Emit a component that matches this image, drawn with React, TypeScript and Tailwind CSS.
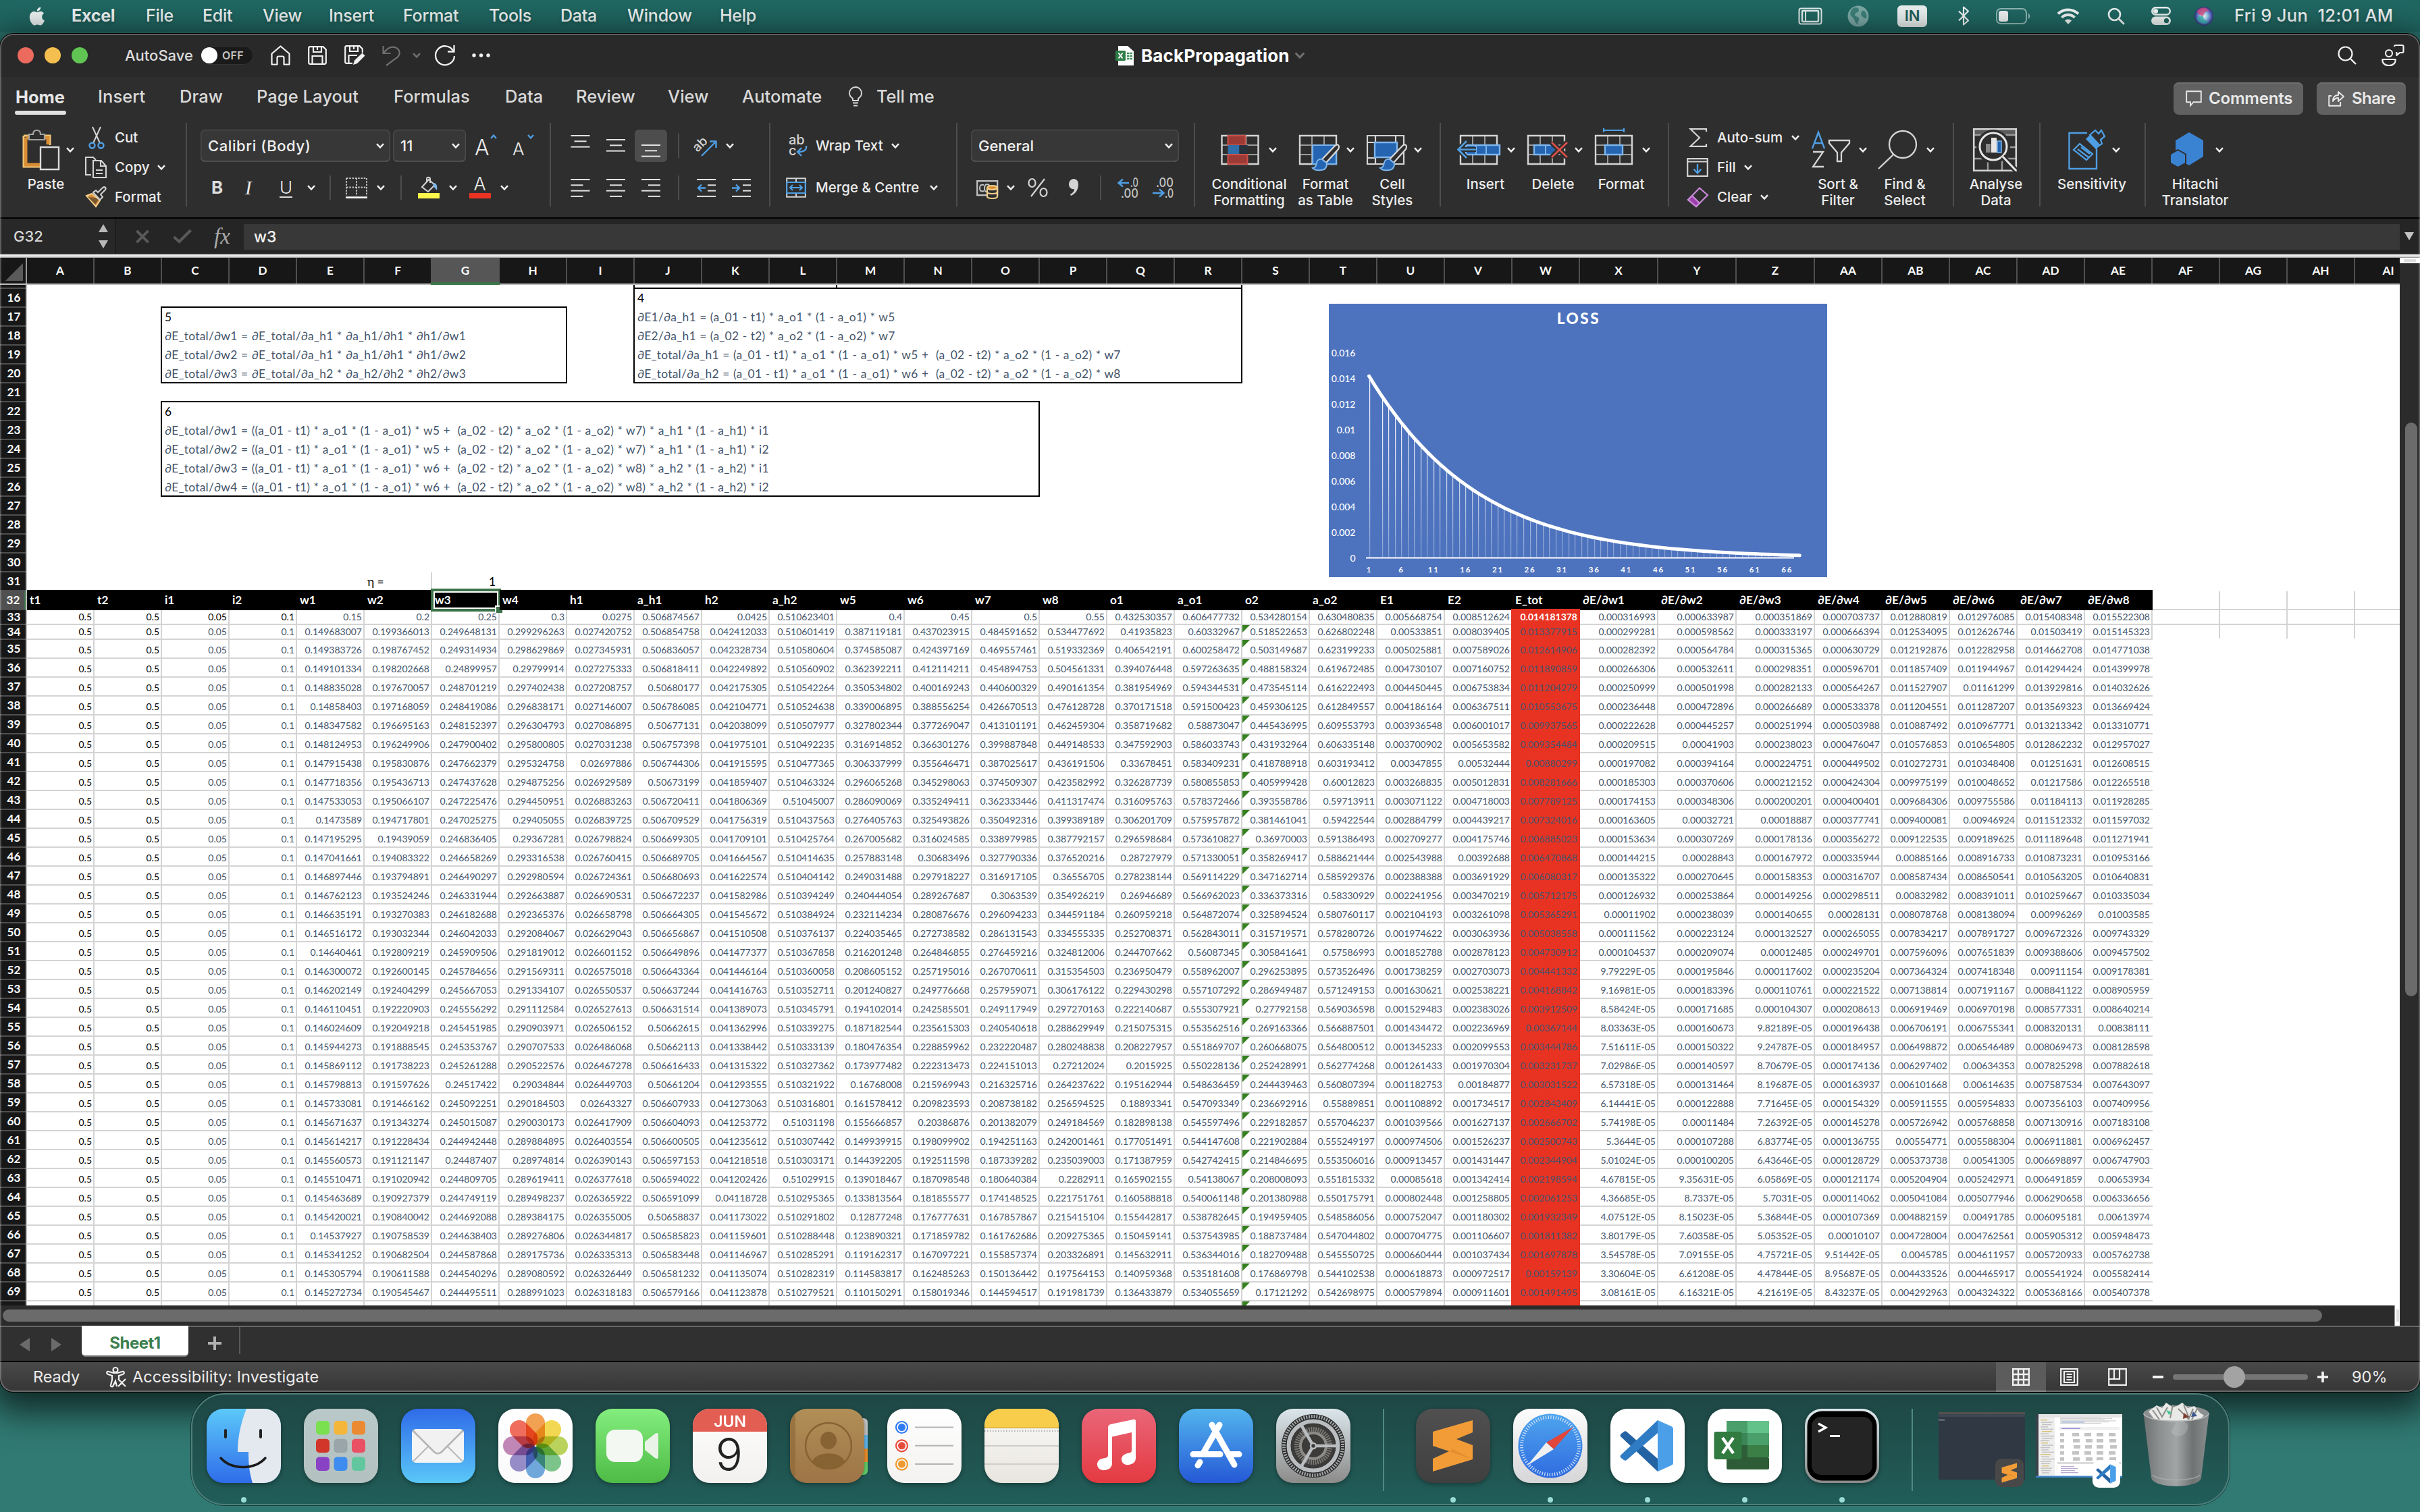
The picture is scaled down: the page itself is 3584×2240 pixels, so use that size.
import React from 'react';

/* ------------------------------------------------------------------ */
/* Network simulation that fills the worksheet                         */
/* ------------------------------------------------------------------ */

const sigmoid = (x: number) => 1 / (1 + Math.exp(-x));

function simulate(steps: number): number[][] {
  const t1 = 0.5, t2 = 0.5, i1 = 0.05, i2 = 0.1, eta = 1;
  let w = [0.15, 0.2, 0.25, 0.3, 0.4, 0.45, 0.5, 0.55];
  const rows: number[][] = [];
  for (let n = 0; n < steps; n++) {
    const h1 = w[0] * i1 + w[1] * i2;
    const h2 = w[2] * i1 + w[3] * i2;
    const ah1 = sigmoid(h1);
    const ah2 = sigmoid(h2);
    const o1 = w[4] * ah1 + w[5] * ah2;
    const o2 = w[6] * ah1 + w[7] * ah2;
    const ao1 = sigmoid(o1);
    const ao2 = sigmoid(o2);
    const e1 = 0.5 * (t1 - ao1) ** 2;
    const e2 = 0.5 * (t2 - ao2) ** 2;
    const d1 = (ao1 - t1) * ao1 * (1 - ao1);
    const d2 = (ao2 - t2) * ao2 * (1 - ao2);
    // The sheet reuses the a_h1 derivative for both hidden units.
    const dh = ah1 * (1 - ah1);
    const g1 = (d1 * w[4] + d2 * w[6]) * dh;
    const g2 = (d1 * w[5] + d2 * w[7]) * dh;
    const g = [g1 * i1, g1 * i2, g2 * i1, g2 * i2, d1 * ah1, d1 * ah2, d2 * ah1, d2 * ah2];
    rows.push([t1, t2, i1, i2, w[0], w[1], w[2], w[3], h1, ah1, h2, ah2, w[4], w[5], w[6], w[7], o1, ao1, o2, ao2, e1, e2, e1 + e2, ...g]);
    w = w.map((v, k) => v - eta * g[k]);
  }
  return rows;
}

function general(v: number): string {
  if (v < 1e-4) {
    const [m, e] = v.toExponential(5).split('e-');
    return `${Number(m)}E-${e.padStart(2, '0')}`;
  }
  return String(Number(v.toFixed(9)));
}

const DATA = simulate(68);

const COLS = ['A', 'B', 'C', 'D', 'E', 'F', 'G', 'H', 'I', 'J', 'K', 'L', 'M', 'N', 'O', 'P', 'Q', 'R', 'S', 'T', 'U', 'V', 'W', 'X', 'Y', 'Z', 'AA', 'AB', 'AC', 'AD', 'AE', 'AF', 'AG', 'AH', 'AI'];
const HEADS = ['t1', 't2', 'i1', 'i2', 'w1', 'w2', 'w3', 'w4', 'h1', 'a_h1', 'h2', 'a_h2', 'w5', 'w6', 'w7', 'w8', 'o1', 'a_o1', 'o2', 'a_o2', 'E1', 'E2', 'E_tot', '∂E/∂w1', '∂E/∂w2', '∂E/∂w3', '∂E/∂w4', '∂E/∂w5', '∂E/∂w6', '∂E/∂w7', '∂E/∂w8'];
const colW = (c: number) => (c >= 23 && c <= 25 ? 'w-[116px]' : 'w-[100px]');

/* ------------------------------------------------------------------ */
/* Small shared pieces                                                 */
/* ------------------------------------------------------------------ */

type P = { children?: React.ReactNode; className?: string };

const Ico = ({ vb, className, children }: P & { vb: string }) => (
  <svg viewBox={vb} className={`shrink-0 overflow-visible ${className ?? ''}`} fill="none">{children}</svg>
);

const Chev = ({ className = '', color = '#f0f0f0' }: { className?: string; color?: string }) => (
  <svg viewBox="0 0 12 8" className={`h-[8px] w-[12px] shrink-0 overflow-visible ${className}`} fill="none">
    <path d="M1 1.2 6 6.4 11 1.2" stroke={color} strokeWidth="2.4" />
  </svg>
);

const Slot = ({ className = '', children }: P) => (
  <div className={`flex shrink-0 items-center whitespace-nowrap ${className}`}>{children}</div>
);

/* ------------------------------------------------------------------ */
/* macOS menu bar                                                      */
/* ------------------------------------------------------------------ */

const MENUS: [string, string][] = [
  ['File', 'w-[84px]'], ['Edit', 'w-[89px]'], ['View', 'w-[98px]'], ['Insert', 'w-[110px]'], ['Format', 'w-[127px]'],
  ['Tools', 'w-[106px]'], ['Data', 'w-[99px]'], ['Window', 'w-[137px]'], ['Help', 'w-[80px]'],
];

function MenuBar() {
  return (
    <div className="flex h-[48px] shrink-0 items-center bg-[#206762] pb-px text-[25px] font-medium tracking-[-0.250px] text-[#eef4f3] [text-shadow:0_2px_4px_rgba(0,0,0,0.25)]">
      <Ico vb="0 0 26 32" className="ml-[40px] mr-[39px] h-[32px] w-[27px]">
        <path fill="#eef4f3" d="M21.6 17c0-3.1 2.5-4.6 2.6-4.7-1.4-2.1-3.6-2.4-4.4-2.4-1.900-.2-3.700 1.100-4.600 1.100-1 0-2.400-1.100-4-1.100-2 0-3.900 1.200-5 3-2.100 3.700-.5 9.200 1.500 12.200 1 1.500 2.200 3.100 3.800 3.100 1.500-.1 2.100-1 4-1 1.800 0 2.300 1 4 .9 1.600 0 2.700-1.500 3.700-2.900 1.200-1.700 1.600-3.300 1.700-3.400-.1 0-3.300-1.200-3.300-4.800zM18.600 7.900c.8-1 1.400-2.400 1.200-3.900-1.200.1-2.700.8-3.500 1.800-.8.900-1.500 2.400-1.300 3.700 1.300.1 2.700-.7 3.600-1.600z" transform="translate(-2.500 -2) scale(1.12)" />
      </Ico>
      <Slot className="w-[110px] font-bold">Excel</Slot>
      {MENUS.map(([t, w]) => <Slot key={t} className={w}>{t}</Slot>)}
      <Ico vb="0 0 36 26" className="ml-[1517px] mr-[37px] h-[26px] w-[36px]">
        <rect x="1.500" y="1.500" width="33" height="23" rx="3" stroke="#e3eeed" strokeWidth="2" />
        <rect x="6" y="5" width="24" height="16" rx="1" stroke="#e3eeed" strokeWidth="2.500" />
        <path d="M11 5v16" stroke="#e3eeed" strokeWidth="2" />
      </Ico>
      <Ico vb="0 0 32 32" className="mr-[42px] h-[32px] w-[32px]">
        <circle cx="16" cy="16" r="15.500" fill="#7ba9a5" />
        <path d="M13 3c4 1 5 4 3 6s-5 2-5 5 5 2 6 5-2 5-2 9c-4-2-4-7-7-10S3 13 5 9s4-6 8-6zM22 8c3-1 5 2 6 5s1 5-1 6-4-2-6-4 0-6 1-7z" fill="#3d7f7a" />
      </Ico>
      <div className="mr-[45px] flex h-[32px] w-[44px] shrink-0 items-center justify-center rounded-[6px] bg-[#eaf1f0] text-[22px] font-semibold text-[#1f5d59] [text-shadow:none]">IN</div>
      <Ico vb="0 0 18 28" className="mr-[39px] h-[29px] w-[18px]">
        <path d="M2 7l14 14-7 6V1l7 6L2 21" stroke="#eef4f3" strokeWidth="2.200" strokeLinejoin="round" />
      </Ico>
      <Ico vb="0 0 52 24" className="mr-[38px] h-[24px] w-[52px]">
        <rect x="1" y="1" width="44" height="22" rx="6" stroke="#8fb8b5" strokeWidth="2" />
        <rect x="4" y="4" width="14" height="16" rx="3.500" fill="#eef4f3" />
        <path d="M48 8c3 1 3 7 0 8z" fill="#8fb8b5" />
      </Ico>
      <Ico vb="0 0 34 25" className="mr-[41px] h-[25px] w-[34px]">
        <path d="M2 9.500a21.500 21.500 0 0 1 30 0M7.500 15a13.500 13.500 0 0 1 19 0" stroke="#eef4f3" strokeWidth="4" />
        <path d="M17 25l-5-5.400a7 7 0 0 1 10 0z" fill="#eef4f3" />
      </Ico>
      <Ico vb="0 0 25 25" className="mr-[40px] h-[25px] w-[25px]">
        <circle cx="10.500" cy="10.500" r="8.500" stroke="#eef4f3" strokeWidth="2.700" />
        <path d="M16.500 16.500 24 24" stroke="#eef4f3" strokeWidth="3" strokeLinecap="round" />
      </Ico>
      <Ico vb="0 0 29 27" className="mr-[35px] h-[27px] w-[29px]">
        <rect x="1.200" y="1.200" width="26.600" height="10.600" rx="5.300" stroke="#eef4f3" strokeWidth="2.400" />
        <circle cx="6.500" cy="6.500" r="3.600" fill="#eef4f3" />
        <rect x="0" y="14.500" width="29" height="12.500" rx="6.200" fill="#eef4f3" />
        <circle cx="22.500" cy="20.700" r="3.600" fill="#206762" />
      </Ico>
      <Ico vb="0 0 28 28" className="mr-[31px] h-[28px] w-[28px]">
        <defs>
          <radialGradient id="siri" cx=".5" cy=".5" r=".55">
            <stop offset="0" stopColor="#fff" />
            <stop offset=".35" stopColor="#9fd0f0" />
            <stop offset=".7" stopColor="#5561c0" />
            <stop offset="1" stopColor="#23264a" />
          </radialGradient>
        </defs>
        <circle cx="14" cy="14" r="14" fill="url(#siri)" />
        <path d="M4 6c5-6 14-6 18 0-6 0-8 4-9 8C9 13 4 11 4 6z" fill="#e0457a" opacity=".75" />
        <path d="M3 17c3 8 13 11 19 5-5 0-9-3-9-8-4 0-8 0-10 3z" fill="#2cb7a8" opacity=".7" />
      </Ico>
      <Slot className="text-[25.500px] tracking-[0.350px]">Fri 9 Jun&nbsp; 12:01 AM</Slot>
    </div>
  );
}

/* ------------------------------------------------------------------ */
/* Window title bar                                                    */
/* ------------------------------------------------------------------ */

function TitleBar() {
  return (
    <div className="flex h-[64px] shrink-0 items-center bg-[#292929] pl-[26px]">
      <div className="flex gap-[16px]">
        <div className="size-[24px] rounded-full bg-[#ed6a5e]" />
        <div className="size-[24px] rounded-full bg-[#f5bf4f]" />
        <div className="size-[24px] rounded-full bg-[#61c554]" />
      </div>
      <Slot className="ml-[55px] w-[112px] text-[22px] font-medium text-[#dcdcdc]">AutoSave</Slot>
      <div className="flex h-[28px] w-[78px] shrink-0 items-center rounded-full bg-[#1a1a1a] pl-px shadow-[inset_0_0_0_1px_#333]">
        <div className="size-[24px] rounded-full bg-white" />
        <span className="ml-[7px] text-[16px] font-semibold tracking-[0.300px] text-[#c4c4c4]">OFF</span>
      </div>
      <Ico vb="0 0 29 30" className="ml-[26px] h-[30px] w-[29px]">
        <path d="M1.500 12.500 14.500 1.500l13 11v16h-8v-10a2 2 0 0 0-2-2h-6a2 2 0 0 0-2 2v10h-8z" stroke="#f2f2f2" strokeWidth="2.200" strokeLinejoin="round" />
      </Ico>
      <Ico vb="0 0 28 28" className="ml-[26px] h-[28px] w-[28px]">
        <path d="M3.500 1.200h19l4.300 4.300v19a2.300 2.300 0 0 1-2.300 2.300h-21a2.300 2.300 0 0 1-2.300-2.300v-21a2.300 2.300 0 0 1 2.300-2.300zM8 1.500v7.500h12V1.500M6.500 26.500V15h15v11.500M14 2v4" stroke="#f2f2f2" strokeWidth="2.200" />
      </Ico>
      <Ico vb="0 0 31 30" className="ml-[26px] h-[30px] w-[31px]">
        <path d="M12 26.800H3.500a2.300 2.300 0 0 1-2.300-2.300v-21a2.300 2.300 0 0 1 2.300-2.300h19l4.300 4.300V11M8 1.500v7.500h12V1.500M6.500 26.500V15H19M14 2v4" stroke="#f2f2f2" strokeWidth="2.200" />
        <path d="M13 29l2-6.500L26.500 11.500l4 4L19 27z" fill="#f2f2f2" />
      </Ico>
      <Ico vb="0 0 28 31" className="ml-[25px] h-[31px] w-[28px]">
        <path d="M1.500 1v11h11M2 11.500C8 4 14 1 20 3.500s7.500 9 3 14L6 30" stroke="#6f6f6f" strokeWidth="2.200" />
      </Ico>
      <Chev className="ml-[17px]" color="#6f6f6f" />
      <Ico vb="0 0 33 32" className="ml-[19px] h-[32px] w-[33px]">
        <path d="M29 9A14 14 0 1 0 31 17M30.500 1v9.500H21" stroke="#f2f2f2" strokeWidth="2.300" />
      </Ico>
      <Ico vb="0 0 27 6" className="ml-[24px] h-[6px] w-[27px]">
        <g fill="#f2f2f2"><circle cx="3" cy="3" r="2.700" /><circle cx="13.500" cy="3" r="2.700" /><circle cx="24" cy="3" r="2.700" /></g>
      </Ico>
      <Ico vb="0 0 27 29" className="ml-[926px] h-[29px] w-[27px]">
        <path d="M4 0h14l9 8v21H4z" fill="#fff" />
        <path d="M17 11h8M17 15h8M17 19h8" stroke="#3c8f5c" strokeWidth="2.600" strokeDasharray="3.500 1" />
        <rect x="0" y="7" width="15" height="15" rx="1.500" fill="#2d7d46" />
        <path d="M4.500 10.500l6 8M10.500 10.500l-6 8" stroke="#fff" strokeWidth="2" />
      </Ico>
      <Slot className="ml-[11px] w-[220px] text-[26px] font-bold tracking-[0.150px] text-white">BackPropagation</Slot>
      <Chev className="ml-[7px] h-[10px]! w-[16px]!" color="#707070" />
      <Ico vb="0 0 28 28" className="ml-[1529px] h-[28px] w-[28px]">
        <circle cx="11.500" cy="11.500" r="10" stroke="#f2f2f2" strokeWidth="2.200" />
        <path d="M18.500 18.500 27 27" stroke="#f2f2f2" strokeWidth="2.400" />
      </Ico>
      <Ico vb="0 0 34 32" className="ml-[37px] h-[32px] w-[34px]">
        <circle cx="11" cy="13" r="5" stroke="#f2f2f2" strokeWidth="2.200" />
        <path d="M1.500 22h19c.8 5-3 9-9.500 9s-10.300-4-9.500-9zM19 3a2 2 0 0 1 2-2h9.500a2 2 0 0 1 2 2v7a2 2 0 0 1-2 2H27l-4.500 4v-4H21" stroke="#f2f2f2" strokeWidth="2.200" strokeLinejoin="round" />
      </Ico>
    </div>
  );
}

/* ------------------------------------------------------------------ */
/* Ribbon                                                              */
/* ------------------------------------------------------------------ */

const TABS: [string, string][] = [
  ['Insert', 'w-[121px]'], ['Draw', 'w-[114px]'], ['Page Layout', 'w-[203px]'], ['Formulas', 'w-[165px]'],
  ['Data', 'w-[105px]'], ['Review', 'w-[136px]'], ['View', 'w-[110px]'], ['Automate', 'w-[158px]'],
];

function TabRow() {
  return (
    <div className="flex h-[64px] shrink-0 items-start pl-[23px] text-[25.500px] font-medium tracking-[0.050px] text-[#d9d9d9]">
      <div className="flex h-[56px] w-[122px] shrink-0 flex-col">
        <div className="h-[50px] font-bold leading-[59px] tracking-[-0.100px] text-[#e6e6e6]">Home</div>
        <div className="-ml-px h-[6px] w-[76px] rounded-full bg-[#e0e0e0]" />
      </div>
      {TABS.map(([t, w]) => <Slot key={t} className={`h-[59px] ${w}`}>{t}</Slot>)}
      <Ico vb="0 0 20 30" className="mt-[14px] h-[30px] w-[20px]">
        <path d="M6 21v-3c-3-2-5-4.500-5-8a9 9 0 0 1 18 0c0 3.500-2 6-5 8v3zM6 24.500h8M7 28.500h6" stroke="#d9d9d9" strokeWidth="1.900" />
      </Ico>
      <Slot className="ml-[21px] h-[59px] w-[1921px] tracking-[-0.200px]">Tell me</Slot>
      <div className="mt-[8px] flex h-[48px] w-[192px] shrink-0 items-center rounded-[8px] bg-[#616161] pl-[18px] text-[24px] font-semibold tracking-[-0.200px] text-[#e8e8e8] shadow-[inset_0_2px_0_#6e6e6e]">
        <Ico vb="0 0 24 24" className="mr-[10px] h-[24px] w-[24px]">
          <path d="M1.200 1.200h21.600v16H11.500L7 22.500v-5.300H1.200z" stroke="#e8e8e8" strokeWidth="1.900" />
        </Ico>
        Comments
      </div>
      <div className="ml-[20px] mt-[8px] flex h-[48px] w-[132px] shrink-0 items-center rounded-[8px] bg-[#616161] pl-[17px] text-[24px] font-semibold tracking-[-0.500px] text-[#e8e8e8] shadow-[inset_0_2px_0_#6e6e6e]">
        <Ico vb="0 0 24 24" className="mr-[11px] h-[24px] w-[24px]">
          <path d="M5 8H1.200v14.800h17V17M7 16c0-6 3-9 8-9V2l8 7-8 7v-5c-4 0-6 1.500-8 5z" stroke="#e8e8e8" strokeWidth="1.900" strokeLinejoin="round" />
        </Ico>
        Share
      </div>
    </div>
  );
}

const Divider = () => <div className="h-[124px] w-[2px] shrink-0 bg-[#4d4d4d]" />;
const MiniDiv = ({ className = '' }: P) => <div className={`h-[36px] w-[2px] shrink-0 bg-[#4d4d4d] ${className}`} />;

const Big = ({ w, pad, chev, label, children, labelPad = '' }: P & { w: string; pad: string; chev?: string; label: string[]; labelPad?: string }) => (
  <div className={`flex h-[128px] shrink-0 flex-col ${w}`}>
    <div className={`flex h-[79px] shrink-0 items-center ${pad}`}>
      {children}
      {chev && <Chev className={chev} />}
    </div>
    <div className={`flex flex-col items-center whitespace-nowrap ${labelPad}`}>
      {label.map((l) => <span key={l}>{l}</span>)}
    </div>
  </div>
);

const Sheet = ({ children, fill }: P & { fill?: string }) => (
  <>
    <path d="M1 1h54v42H1z" fill={fill ?? 'none'} />
    <path d="M19 1v42M37 1v42M1 15h54M1 29h54" stroke="#9a9a9a" strokeWidth="2" />
    <path d="M1 1h54v42H1z" stroke="#d4d4d4" strokeWidth="2.400" />
    {children}
  </>
);

const Lines = ({ rows }: { rows: [number, number][] }) => (
  <g fill="#e2e2e2">
    {rows.map(([x, w], i) => <rect key={i} x={x} y={i * 8.300} width={w} height="2" />)}
  </g>
);

const Select = ({ className, children }: P) => (
  <div className={`flex h-[48px] shrink-0 items-center justify-between rounded-[7px] bg-[#373737] pl-[11px] pr-[9px] text-[22px] font-medium text-[#f0f0f0] shadow-[inset_0_0_0_1.500px_#4a4a4a,inset_0_-2px_0_#666] ${className}`}>
    {children}
    <Chev />
  </div>
);

const Brush = () => (
  <>
    <path d="M58 15c2 2 1 4 0 6L40 41l-6-5 19-20c2-1.500 4-2 5-1z" fill="#2e2e2e" stroke="#d9d9d9" strokeWidth="2.200" />
    <path d="M34 36l7 6c0 6-3 10-9 10-6 1-10-1-12-3 5-1 5-4 6-8s4-6 8-5z" fill="#2564b0" stroke="#7db5ec" strokeWidth="2" />
  </>
);

function Ribbon() {
  return (
    <div className="flex h-[144px] shrink-0 items-start pt-[4px] text-[20.500px] font-medium leading-[24px] text-[#ececec]">
      <div className="flex w-[275px] shrink-0">
        <Big w="w-[126px]" pad="pl-[33px]" chev="ml-[9px]" label={['Paste']} labelPad="pl-[10px]">
          <Ico vb="0 0 56 60" className="h-[60px] w-[56px]">
            <path d="M2 9h39v14M27 55H2V9" stroke="#f2c879" strokeWidth="3" />
            <path d="M5 12h33v10M26 52H5V12" stroke="#d98d34" strokeWidth="5" />
            <path d="M10 15V7h6c0-4 2-6 5.500-6S27 3 27 7h6v8z" fill="#2e2e2e" stroke="#a3a3a3" strokeWidth="2.200" />
            <path d="M27 26h27v33H27z" fill="#2e2e2e" stroke="#dcdcdc" strokeWidth="2.400" />
          </Ico>
        </Big>
        <div className="flex flex-col">
          <div className="flex h-[44px] items-center">
            <Slot className="w-[44px] pl-[5px]">
              <Ico vb="0 0 24 32" className="h-[32px] w-[24px]">
                <path d="M6 0l11 24M18 0L7 24" stroke="#d4d4d4" strokeWidth="2" />
                <circle cx="5.500" cy="27.500" r="4" stroke="#4f9ee3" strokeWidth="2.400" />
                <circle cx="18.500" cy="27.500" r="4" stroke="#4f9ee3" strokeWidth="2.400" />
              </Ico>
            </Slot>
            Cut
          </div>
          <div className="flex h-[44px] items-center">
            <Slot className="w-[44px]">
              <Ico vb="0 0 32 32" className="h-[32px] w-[32px]">
                <path d="M9 27H1V1h11l4 4" stroke="#d4d4d4" strokeWidth="2.100" />
                <path d="M12 6h12l7 8v17H12zM23 6v8h8M16 20h10M16 25h10" stroke="#d4d4d4" strokeWidth="2.100" />
              </Ico>
            </Slot>
            <Slot className="w-[63px]">Copy</Slot>
            <Chev />
          </div>
          <div className="flex h-[44px] items-center">
            <Slot className="w-[44px]">
              <Ico vb="0 0 32 30" className="h-[30px] w-[32px]">
                <path d="M2 13l8-3 12 10-6 9z" fill="#d98d34" stroke="#f2d08c" strokeWidth="2" />
                <path d="M4 15l12 1 4 3-5 7z" fill="#2e2e2e" opacity=".55" />
                <path d="M12 8l10 11 4-4-3-4 7-7c2-3-1-5-4-3l-7 7-3-3z" fill="#2e2e2e" stroke="#d4d4d4" strokeWidth="2" />
              </Ico>
            </Slot>
            Format
          </div>
        </div>
      </div>
      <Divider />

      <div className="flex w-[537px] shrink-0 flex-col">
        <div className="flex h-[68px] items-center pl-[20px]">
          <Select className="w-[281px] tracking-[0.600px]">Calibri (Body)</Select>
          <Select className="ml-[4px] w-[108px]">11</Select>
          <Slot className="relative ml-[13px] h-[40px] w-[36px] pt-[6px] text-[32px] font-light">
            A
            <Ico vb="0 0 10 7" className="absolute right-[3px] top-[3px] h-[7px] w-[10px]"><path d="M1 6l4-4.500L9 6" stroke="#4f9ee3" strokeWidth="2.400" /></Ico>
          </Slot>
          <Slot className="relative ml-[20px] h-[40px] w-[32px] pt-[9px] text-[26px] font-light">
            A
            <Ico vb="0 0 10 7" className="absolute right-0 top-[3px] h-[7px] w-[10px]"><path d="M1 1l4 4.500L9 1" stroke="#4f9ee3" strokeWidth="2.400" /></Ico>
          </Slot>
        </div>
        <div className="flex h-[56px] items-center pl-[36px]">
          <Slot className="w-[50px] text-[26px] font-bold text-[#dcdcdc]">B</Slot>
          <Slot className="w-[51px] font-['Liberation_Serif'] text-[29px] italic">I</Slot>
          <Slot className="w-[41px] text-[26px] font-light"><span className="border-b-2 border-[#dcdcdc] leading-[27px]">U</span></Slot>
          <Chev />
          <MiniDiv className="ml-[21px]" />
          <Ico vb="0 0 32 31" className="ml-[22px] h-[31px] w-[32px]">
            <path d="M1 1h30M1 1v26M31 1v26M16 1v26M1 14.500h30" stroke="#c4c4c4" strokeWidth="2" strokeDasharray="2.500 1.800" />
            <path d="M0 29.500h32" stroke="#fff" strokeWidth="2.600" />
          </Ico>
          <Chev className="ml-[14px]" />
          <MiniDiv className="ml-[23px]" />
          <Ico vb="0 0 32 32" className="ml-[24px] h-[32px] w-[32px]">
            <rect x="0" y="24" width="32" height="8" fill="#fcf84c" />
            <path d="M6 15L16 4l9 8-10 10zM13 8V3c0-3 5-3 5 0v6" stroke="#d4d4d4" strokeWidth="2" />
            <path d="M24 9c4 1 5 5 4 11-2-3-5-5-6-8z" fill="#7db5ec" />
          </Ico>
          <Chev className="ml-[14px]" />
          <div className="ml-[17px] flex h-[32px] w-[33px] shrink-0 flex-col items-center text-[27px] font-light leading-[22px]">
            <span className="h-[24px]">A</span>
            <div className="h-[8px] w-[32px] bg-[#ea3323]" />
          </div>
          <Chev className="ml-[14px]" />
        </div>
      </div>
      <Divider />

      <div className="flex w-[323px] shrink-0 flex-col">
        <div className="flex h-[68px] items-center pl-[29px]">
          <Ico vb="0 0 28 19" className="mb-[14px] h-[19px] w-[29px]"><Lines rows={[[0, 28], [5, 18], [0, 28]]} /></Ico>
          <Ico vb="0 0 28 19" className="ml-[24px] mb-[2px] h-[19px] w-[28px]"><Lines rows={[[0, 28], [5, 18], [0, 28]]} /></Ico>
          <div className="ml-[14px] flex h-[48px] w-[48px] shrink-0 items-center justify-center rounded-[6px] bg-[#4d4d4d] pt-[14px]">
            <Ico vb="0 0 28 19" className="h-[19px] w-[28px]"><Lines rows={[[0, 28], [5, 18], [0, 28]]} /></Ico>
          </div>
          <MiniDiv className="ml-[16px]" />
          <Ico vb="0 0 34 32" className="ml-[23px] h-[32px] w-[34px]">
            <text x="-3" y="19" transform="rotate(-45 9 14)" fontSize="19" fill="#d4d4d4" fontFamily="Inter">ab</text>
            <path d="M10 31L31 10M22 9.500h9.500V19" stroke="#4f9ee3" strokeWidth="2.400" />
          </Ico>
          <Chev className="ml-[12px]" />
        </div>
        <div className="flex h-[56px] items-center pl-[29px]">
          <Ico vb="0 0 28 27" className="h-[27px] w-[29px]"><Lines rows={[[0, 28], [0, 18], [0, 28], [0, 18]]} /></Ico>
          <Ico vb="0 0 28 27" className="ml-[24px] h-[27px] w-[28px]"><Lines rows={[[0, 28], [5, 18], [0, 28], [5, 18]]} /></Ico>
          <Ico vb="0 0 28 27" className="ml-[24px] h-[27px] w-[28px]"><Lines rows={[[0, 28], [10, 18], [0, 28], [10, 18]]} /></Ico>
          <MiniDiv className="ml-[26px]" />
          <Ico vb="0 0 28 27" className="ml-[26px] h-[27px] w-[28px]">
            <Lines rows={[[0, 28], [16, 12], [16, 12], [0, 28]]} />
            <path d="M13 13.500H2M7 8.500l-5 5 5 5" stroke="#4f9ee3" strokeWidth="2.400" />
          </Ico>
          <Ico vb="0 0 28 27" className="ml-[24px] h-[27px] w-[28px]">
            <Lines rows={[[0, 28], [16, 12], [16, 12], [0, 28]]} />
            <path d="M0 13.500h11M6 8.500l5 5-5 5" stroke="#4f9ee3" strokeWidth="2.400" />
          </Ico>
        </div>
      </div>
      <Divider />

      <div className="flex w-[275px] shrink-0 flex-col">
        <div className="flex h-[68px] items-center pl-[27px]">
          <Ico vb="0 0 28 32" className="h-[32px] w-[28px]">
            <text x="0" y="14" fontSize="20" fill="#d4d4d4" fontFamily="Inter">ab</text>
            <text x="0" y="30" fontSize="20" fill="#d4d4d4" fontFamily="Inter">c</text>
            <path d="M26 16c1 6-3 9-12 9M19 19l-6 6 6 6" stroke="#4f9ee3" strokeWidth="2.400" />
          </Ico>
          <Slot className="ml-[12px] w-[112px]">Wrap Text</Slot>
          <Chev />
        </div>
        <div className="flex h-[56px] items-center pl-[23px]">
          <Ico vb="0 0 30 30" className="h-[30px] w-[30px]">
            <path d="M1.200 1.200h27.600v27.600H1.200zM15 1v6M15 23v6" stroke="#d4d4d4" strokeWidth="2" />
            <path d="M1.200 7h27.600v16H1.200z" fill="#2e2e2e" stroke="#4f9ee3" strokeWidth="2.200" />
            <path d="M6 15h18M10 11l-4 4 4 4M20 11l4 4-4 4" stroke="#4f9ee3" strokeWidth="2.200" />
          </Ico>
          <Slot className="ml-[14px] w-[169px]">Merge &amp; Centre</Slot>
          <Chev />
        </div>
      </div>
      <Divider />

      <div className="flex w-[350px] shrink-0 flex-col">
        <div className="flex h-[68px] items-center pl-[20px]">
          <Select className="w-[308px]">General</Select>
        </div>
        <div className="flex h-[56px] items-center pl-[28px]">
          <Ico vb="0 0 33 28" className="mt-[6px] h-[28px] w-[33px]">
            <path d="M1.200 1.200h30v21h-30z" stroke="#c4c4c4" strokeWidth="2.200" />
            <path d="M11 7c-5-1-6 1-6 5s2 5 6 4M20 12c0-4-1-6-4-6s-4 3-4 6 1 5 3 5" stroke="#c4c4c4" strokeWidth="2" />
            <path d="M15 11v12c0 5 17 5 17 0V11z" fill="#2e2e2e" />
            <path d="M16 11v13c0 4 15 4 15 0V11M16 17c0 4 15 4 15 0" stroke="#f2d08c" strokeWidth="2.200" />
            <ellipse cx="23.500" cy="11" rx="7.500" ry="3" fill="#d98d34" stroke="#f2d08c" strokeWidth="2.200" />
          </Ico>
          <Chev className="ml-[12px]" />
          <Ico vb="0 0 30 28" className="ml-[19px] h-[28px] w-[30px]">
            <path d="M25 1L5 27" stroke="#d4d4d4" strokeWidth="2.200" />
            <ellipse cx="6.500" cy="7" rx="5" ry="6" stroke="#d4d4d4" strokeWidth="2.200" />
            <ellipse cx="23.500" cy="21" rx="5" ry="6" stroke="#d4d4d4" strokeWidth="2.200" />
          </Ico>
          <Ico vb="0 0 16 26" className="ml-[30px] h-[26px] w-[16px]">
            <path d="M8 0c5 0 7 4 7 8 0 8-4 14-11 17l-1-2c4-2 6-5 6-8-5 1-8-3-8-7s3-8 7-8z" fill="#d4d4d4" />
          </Ico>
          <MiniDiv className="ml-[31px]" />
          <Ico vb="0 0 31 32" className="ml-[24px] h-[32px] w-[31px]">
            <path d="M17 9H1M8 3.500L1.500 9 8 14.500" stroke="#4f9ee3" strokeWidth="2.400" />
            <text x="19" y="15" textLength="12" lengthAdjust="spacingAndGlyphs" fontSize="19" fill="#c4c4c4" fontFamily="Inter">.0</text>
            <text x="5" y="31" textLength="26" lengthAdjust="spacingAndGlyphs" fontSize="19" fill="#c4c4c4" fontFamily="Inter">.00</text>
          </Ico>
          <Ico vb="0 0 31 32" className="ml-[21px] h-[32px] w-[31px]">
            <text x="5" y="15" textLength="26" lengthAdjust="spacingAndGlyphs" fontSize="19" fill="#c4c4c4" fontFamily="Inter">.00</text>
            <path d="M0 24h16M10 18.500l6.500 5.500-6.500 5.500" stroke="#4f9ee3" strokeWidth="2.400" />
            <text x="18" y="31" textLength="13" lengthAdjust="spacingAndGlyphs" fontSize="19" fill="#c4c4c4" fontFamily="Inter">.0</text>
          </Ico>
        </div>
      </div>
      <Divider />

      <div className="flex w-[362px] shrink-0 pl-[18px]">
        <Big w="w-[124px]" pad="pl-[20px]" chev="ml-[14px]" label={['Conditional', 'Formatting']}>
          <Ico vb="0 0 56 44" className="h-[44px] w-[57px]">
            <Sheet>
              <path d="M10 1h26v14H10z" fill="#9c3b36" stroke="#c9514a" strokeWidth="2" />
              <path d="M10 15h17v14H10z" fill="#2f6ea8" />
              <path d="M27 15h12v14H27z" fill="#26313b" />
              <path d="M10 29h29v14H10z" fill="#9c3b36" stroke="#c9514a" strokeWidth="2" />
            </Sheet>
          </Ico>
        </Big>
        <Big w="w-[102px]" pad="pl-[12px]" chev="ml-[12px]" label={['Format', 'as Table']}>
          <Ico vb="0 0 58 44" className="h-[44px] w-[58px]">
            <Sheet><path d="M20 15h35v28H20z" fill="#2564b0" stroke="#7db5ec" strokeWidth="2.200" /></Sheet>
            <Brush />
          </Ico>
        </Big>
        <Big w="w-[96px]" pad="pl-[9px]" chev="ml-[11px]" label={['Cell', 'Styles']}>
          <Ico vb="0 0 58 44" className="h-[44px] w-[60px]">
            <path d="M1 1h54v42H1zM13 1v42M43 1v10M1 11h12M1 34h12" stroke="#d4d4d4" strokeWidth="2.200" />
            <path d="M12 11h33v22H12z" fill="#2564b0" stroke="#7db5ec" strokeWidth="2.400" />
            <Brush />
          </Ico>
        </Big>
      </div>
      <Divider />

      <div className="flex w-[336px] shrink-0 pl-[16px]">
        <Big w="w-[100px]" pad="pl-[8px]" chev="ml-[10px]" label={['Insert']}>
          <Ico vb="0 0 64 44" className="h-[44px] w-[64px]">
            <g transform="translate(4 0)"><Sheet /></g>
            <path d="M13 15h50v14H13z" fill="#2564b0" stroke="#7db5ec" strokeWidth="2.400" />
            <path d="M28 15v14M43 15v14" stroke="#7db5ec" strokeWidth="2" />
            <path d="M28 21.500H2M14 9L1.500 21.500 14 34" stroke="#2e2e2e" strokeWidth="7" />
            <path d="M28 21.500H2M14 9L1.500 21.500 14 34" stroke="#4f9ee3" strokeWidth="2.600" />
          </Ico>
        </Big>
        <Big w="w-[100px]" pad="pl-[12px]" chev="ml-[12px]" label={['Delete']}>
          <Ico vb="0 0 58 44" className="h-[44px] w-[58px]">
            <Sheet />
            <path d="M10 15h27l6 7-6 7H10z" fill="#2564b0" stroke="#7db5ec" strokeWidth="2.400" />
            <path d="M27 15v14" stroke="#7db5ec" strokeWidth="2" />
            <path d="M36 11l23 22M59 11L36 33" stroke="#2e2e2e" strokeWidth="8" />
            <path d="M36 11l23 22M59 11L36 33" stroke="#e0504a" strokeWidth="2.600" />
          </Ico>
        </Big>
        <Big w="w-[102px]" pad="pl-[12px]" chev="ml-[14px]" label={['Format']}>
          <Ico vb="0 0 56 44" className="h-[44px] w-[56px]">
            <Sheet><path d="M15 15h26v14H15z" fill="#2564b0" stroke="#7db5ec" strokeWidth="2.400" /></Sheet>
            <path d="M13 -7h30M13 -10v6M43 -10v6" stroke="#4f9ee3" strokeWidth="2.200" />
          </Ico>
        </Big>
      </div>
      <Divider />

      <div className="flex w-[420px] shrink-0 pl-[26px]">
        <div className="flex w-[178px] shrink-0 flex-col">
          <div className="flex h-[44px] items-center">
            <Slot className="w-[45px] pl-[4px]">
              <Ico vb="0 0 26 28" className="h-[28px] w-[26px]"><path d="M25 5V1.200H1.500L15 14 1.500 26.800H25V23" stroke="#d4d4d4" strokeWidth="2.200" /></Ico>
            </Slot>
            <Slot className="w-[110px]">Auto-sum</Slot>
            <Chev />
          </div>
          <div className="flex h-[44px] items-center">
            <Slot className="w-[45px]">
              <Ico vb="0 0 32 28" className="h-[28px] w-[32px]">
                <path d="M1.200 1.200h29.600v25.600H1.200zM1 5.500h30" stroke="#d4d4d4" strokeWidth="2.200" />
                <path d="M16 9v13M10.500 16.500l5.500 6 5.500-6" stroke="#4f9ee3" strokeWidth="2.400" />
              </Ico>
            </Slot>
            <Slot className="w-[40px]">Fill</Slot>
            <Chev />
          </div>
          <div className="flex h-[44px] items-center">
            <Slot className="w-[45px]">
              <Ico vb="0 0 32 30" className="h-[30px] w-[32px]">
                <path d="M2 19L19 1.500 31 12 14 29z" stroke="#c98ad6" strokeWidth="2.200" />
                <path d="M2 19l6-6 11 11-5 5z" fill="#9c3fae" stroke="#c98ad6" strokeWidth="2.200" />
              </Ico>
            </Slot>
            <Slot className="w-[64px]">Clear</Slot>
            <Chev />
          </div>
        </div>
        <Big w="w-[92px]" pad="pl-[7px]" chev="ml-[13px]" label={['Sort &', 'Filter']}>
          <Ico vb="0 0 57 54" className="h-[54px] w-[57px]">
            <path d="M1 25L10 1l9 24M4 17h12" stroke="#4f9ee3" strokeWidth="2.400" />
            <path d="M2 30h15L2 52h16" stroke="#d4d4d4" strokeWidth="2.300" />
            <path d="M26 13h30v4L44 31v13h-6V31L26 17z" stroke="#d4d4d4" strokeWidth="2.300" />
          </Ico>
        </Big>
        <Big w="w-[106px]" pad="pl-[13px]" chev="ml-[12px]" label={['Find &', 'Select']}>
          <Ico vb="0 0 60 58" className="h-[58px] w-[60px]">
            <circle cx="37" cy="21" r="20" stroke="#d4d4d4" strokeWidth="2.300" />
            <path d="M23 36L1 57" stroke="#d4d4d4" strokeWidth="2.300" />
          </Ico>
        </Big>
      </div>
      <Divider />

      <div className="flex w-[126px] shrink-0 pl-px">
        <Big w="w-[122px]" pad="pl-[27px]" label={['Analyse', 'Data']}>
          <Ico vb="0 0 65 64" className="h-[64px] w-[65px]">
            <path d="M1 1h63v9H1z" fill="#5c5c5c" />
            <path d="M1 10h63M1 28h63M1 45h63M22 10v53M43 10v53" stroke="#9a9a9a" strokeWidth="2.400" />
            <path d="M1.200 1.200h62.600v61.600H1.200z" stroke="#d4d4d4" strokeWidth="2.600" />
            <circle cx="30" cy="27" r="25" fill="#2e2e2e" />
            <circle cx="30" cy="27" r="20" stroke="#e6e6e6" strokeWidth="3" />
            <path d="M44 42l20 21" stroke="#2e2e2e" strokeWidth="8" />
            <path d="M44 42l20 21" stroke="#e6e6e6" strokeWidth="3" />
            <rect x="19" y="23" width="7" height="13" fill="#8a8a8a" />
            <rect x="27" y="14" width="8" height="22" fill="#e6e6e6" />
            <rect x="36" y="19" width="6" height="17" fill="#2564b0" stroke="#7db5ec" strokeWidth="1.500" />
          </Ico>
        </Big>
      </div>
      <Divider />

      <div className="flex w-[154px] shrink-0 pl-px">
        <Big w="w-[150px]" pad="pl-[40px]" chev="ml-[10px]" label={['Sensitivity']}>
          <Ico vb="0 0 55 60" className="h-[60px] w-[55px]">
            <path d="M28 5H1.500v53H42V28" stroke="#4f9ee3" strokeWidth="2.400" />
            <path d="M8 30l9-9 19 15-9 9zM14 29l16 12M19 26l13 10" stroke="#4f9ee3" strokeWidth="2.300" />
            <path d="M26 14l7-7 15 16-7 6z" fill="#4f9ee3" />
            <path d="M32 8l8-7 5 5 4-5 5 9-6 5 2 6-5 3z" stroke="#4f9ee3" strokeWidth="2.300" />
          </Ico>
        </Big>
      </div>
      <Divider />

      <div className="flex shrink-0 pl-[18px]">
        <Big w="w-[110px]" pad="pl-[19px]" chev="ml-[17px]" label={['Hitachi', 'Translator']}>
          <Ico vb="0 0 49 51" className="h-[51px] w-[49px]">
            <path d="M27 0l21 12v24L27 49 7 37V12z" fill="#3a82d2" />
            <path d="M10.500 26L22 32.500v13L10.500 52-1 45.500v-13z" fill="#3a82d2" stroke="#2e2e2e" strokeWidth="2" />
          </Ico>
        </Big>
      </div>
    </div>
  );
}

function FormulaBar() {
  return (
    <div className="flex h-[52px] shrink-0 items-center bg-[#252525] text-[#d6d6d6]">
      <div className="flex h-full w-[170px] shrink-0 items-center bg-[#282828] pl-[20px] text-[22px] font-medium">
        <Slot className="w-[126px]">G32</Slot>
        <Ico vb="0 0 14 36" className="h-[36px] w-[14px]">
          <path d="M7 0l7 12H0zM7 36l7-12H0z" fill="#b8b8b8" />
        </Ico>
      </div>
      <div className="h-full w-[2px] bg-[#1c1c1c]" />
      <Ico vb="0 0 20 20" className="ml-[29px] h-[19px] w-[20px]"><path d="M1 1l18 18M19 1L1 19" stroke="#5a5a5a" strokeWidth="4" /></Ico>
      <Ico vb="0 0 28 20" className="ml-[35px] h-[20px] w-[28px]"><path d="M1.500 11l8 7L26.500 1" stroke="#5a5a5a" strokeWidth="4.200" /></Ico>
      <span className="ml-[33px] w-[44px] font-['Liberation_Serif'] text-[33px] italic leading-[40px] text-[#a8a8a8]">fx</span>
      <div className="mt-[1px] h-[38px] w-[3193px] bg-[#383838] pl-[15px] text-[23px] font-medium leading-[38px] text-[#f2f2f2]">w3</div>
      <Ico vb="0 0 14 12" className="ml-[7px] h-[12px] w-[14px]"><path d="M0 0h14L7 12z" fill="#c4c4c4" /></Ico>
    </div>
  );
}

/* ------------------------------------------------------------------ */
/* Worksheet                                                           */
/* ------------------------------------------------------------------ */

function LossChart() {
  const x = (i: number) => 59.500 + i * 9.520;
  const y = (v: number) => 376.500 - v * 19000;
  const pts = DATA.map((r, i) => `${x(i).toFixed(1)},${y(r[22]).toFixed(1)}`).join(' ');
  return (
    <svg viewBox="0 0 738 405" className="absolute left-[1928px] top-[28px] h-[405px] w-[738px] bg-[#4e73be] font-['Lato']" fill="#fff">
      <defs>
        <linearGradient id="drop" gradientUnits="userSpaceOnUse" x1="0" y1="107" x2="0" y2="377">
          <stop offset="0" stopColor="#fff" />
          <stop offset="0.550" stopColor="#fff" stopOpacity=".75" />
          <stop offset="1" stopColor="#fff" stopOpacity=".3" />
        </linearGradient>
      </defs>
      <text x="370" y="30" fontSize="22.500" fontWeight="900" letterSpacing="2.600" textAnchor="middle">LOSS</text>
      {[0, 0.002, 0.004, 0.006, 0.008, 0.01, 0.012, 0.014, 0.016].map((v) => (
        <text key={v} x="39.500" y={y(v) + 5} fontSize="14" fontWeight="500" textAnchor="end">{v}</text>
      ))}
      {DATA.map((r, i) => (i === 1 ? null : (
        <rect key={i} x={Math.round(x(i))} y={y(r[22])} width="1.200" height={Math.max(0, 376 - y(r[22]))} fill="url(#drop)" />
      )))}
      <rect x="55" y="375.500" width="634" height="2" />
      <polyline points={pts} fill="none" stroke="#fff" strokeWidth="5" strokeLinecap="round" strokeLinejoin="round" />
      {Array.from({ length: 14 }, (_, k) => 1 + k * 5).map((n) => (
        <text key={n} x={x(n - 1) + 0.500} y="397.500" fontSize="11.500" fontWeight="700" letterSpacing="1.800" textAnchor="middle">{n}</text>
      ))}
    </svg>
  );
}

const Box = ({ className, title, lines }: { className: string; title: string; lines: string[] }) => (
  <div className={`-ml-[2px] -mt-[2px] flex flex-col whitespace-pre border-2 border-black pl-[4px] leading-[28px] tracking-[0.250px] text-[#44546a] [word-spacing:0.7px] ${className}`}>
    <span className="text-black">{title}</span>
    {lines.map((l) => <span key={l}>{l}</span>)}
  </div>
);

function Notes() {
  return (
    <div className="relative h-[452px] shrink-0 overflow-hidden text-[17.400px]">
      <div className="-mt-[22px] grid grid-cols-[repeat(23,100px)_repeat(3,116px)_repeat(9,100px)] grid-rows-[repeat(17,28px)]">
        <div className="col-start-10 col-span-3 row-start-1 -ml-[2px] whitespace-pre border-x-2 border-black pl-[4px] leading-[26px] text-[#44546a]">{'        ∂(E)/∂a_h1 /∂a'}</div>
        <div className="col-start-13 col-span-6 row-start-1 whitespace-pre border-r-2 border-black pl-[4px] leading-[26px] text-[#44546a]">∂E_total/∂a_h2 = ∂E1/∂a_h2 + ∂E2/∂a_h2 + ∂E_total/∂a_h2</div>
        <Box
          className="col-start-10 col-span-9 row-start-2 row-span-5"
          title="4"
          lines={[
            '∂E1/∂a_h1 = (a_01 - t1) * a_o1 * (1 - a_o1) * w5',
            '∂E2/∂a_h1 = (a_02 - t2) * a_o2 * (1 - a_o2) * w7',
            '∂E_total/∂a_h1 = (a_01 - t1) * a_o1 * (1 - a_o1) * w5 +  (a_02 - t2) * a_o2 * (1 - a_o2) * w7',
            '∂E_total/∂a_h2 = (a_01 - t1) * a_o1 * (1 - a_o1) * w6 +  (a_02 - t2) * a_o2 * (1 - a_o2) * w8',
          ]}
        />
        <Box
          className="col-start-3 col-span-6 row-start-3 row-span-4"
          title="5"
          lines={[
            '∂E_total/∂w1 = ∂E_total/∂a_h1 * ∂a_h1/∂h1 * ∂h1/∂w1',
            '∂E_total/∂w2 = ∂E_total/∂a_h1 * ∂a_h1/∂h1 * ∂h1/∂w2',
            '∂E_total/∂w3 = ∂E_total/∂a_h2 * ∂a_h2/∂h2 * ∂h2/∂w3',
          ]}
        />
        <Box
          className="col-start-3 col-span-13 row-start-8 row-span-5"
          title="6"
          lines={[
            '∂E_total/∂w1 = ((a_01 - t1) * a_o1 * (1 - a_o1) * w5 +  (a_02 - t2) * a_o2 * (1 - a_o2) * w7) * a_h1 * (1 - a_h1) * i1',
            '∂E_total/∂w2 = ((a_01 - t1) * a_o1 * (1 - a_o1) * w5 +  (a_02 - t2) * a_o2 * (1 - a_o2) * w7) * a_h1 * (1 - a_h1) * i2',
            '∂E_total/∂w3 = ((a_01 - t1) * a_o1 * (1 - a_o1) * w6 +  (a_02 - t2) * a_o2 * (1 - a_o2) * w8) * a_h2 * (1 - a_h2) * i1',
            '∂E_total/∂w4 = ((a_01 - t1) * a_o1 * (1 - a_o1) * w6 +  (a_02 - t2) * a_o2 * (1 - a_o2) * w8) * a_h2 * (1 - a_h2) * i2',
          ]}
        />
        <div className="col-start-6 row-start-17 pl-[4px] leading-[28px] text-black">η =</div>
        <div className="col-start-7 row-start-17 -ml-[2px] border-l-2 border-[#d4d4d4] pr-[6px] text-right leading-[28px] text-black">1</div>
      </div>
      <LossChart />
    </div>
  );
}

function HeadRow() {
  return (
    <div className="relative z-10 flex h-[30px] shrink-0">
      {HEADS.map((h, c) => (
        <div key={h} className={`relative shrink-0 bg-black pl-[4px] font-bold leading-[30px] text-white ${colW(c)}`}>
          {h}
          {c === 6 && (
            <>
              <div className="absolute -inset-[2px] border-4 border-[#3c7348] shadow-[inset_0_0_0_2px_#fff]" />
              <div className="absolute -bottom-[4px] -right-[4px] size-[11px] border-l-2 border-t-2 border-white bg-[#3c7348]" />
            </>
          )}
        </div>
      ))}
      {['AF', 'AG', 'AH', 'AI'].map((c) => <div key={c} className="mt-[2px] w-[100px] shrink-0 border-b-2 border-r-2 border-[#d4d4d4]" />)}
    </div>
  );
}

function DataRow({ row, idx }: { row: number[]; idx: number }) {
  const short = idx < 2;
  const h = short ? 'h-[22px] leading-[20px]' : 'h-[28px] pt-[2px] leading-[26px]';
  return (
    <div className={`flex shrink-0 ${short ? 'h-[22px]' : 'h-[28px]'}`}>
      {row.map((v, c) => {
        const plain = c < 2 || (idx === 0 && c < 4);
        const red = c === 22;
        const line = red
          ? 'relative z-20 -ml-[2px] w-[102px] bg-[#e83323] pr-[4px]'
          : `border-b-2 border-[#d4d4d4] pr-[2px] ${c === 30 && !short ? 'pr-[4px]!' : 'border-r-2'} ${colW(c)}`;
        const tone = red && idx === 0 ? 'font-bold text-white -mt-[2px] h-[24px]! pt-[2px]' : plain ? 'text-black' : 'text-[#44546a]';
        return (
          <div key={c} className={`relative shrink-0 text-right ${h} ${line} ${tone}`}>
            {idx < 37 && general(v)}
            {c === 18 && idx > 0 && <div className="absolute left-0 top-0 size-[11px] bg-[#35801f] [clip-path:polygon(0_0,100%_0,0_100%)]" />}
          </div>
        );
      })}
      {short && ['AF', 'AG', 'AH', 'AI'].map((c) => (
        <div key={c} className={`w-[100px] shrink-0 border-r-2 border-[#d4d4d4] ${idx === 0 ? 'border-b-2' : 'h-[20px]'}`} />
      ))}
    </div>
  );
}

function RowNumbers() {
  const rows = Array.from({ length: 56 }, (_, k) => 15 + k);
  return (
    <div className="flex w-[40px] shrink-0 flex-col overflow-hidden border-r-2 border-[#bdbdbd] bg-[#171717] text-center font-bold text-white">
      {rows.map((r) => {
        const size = r === 15 ? 'h-[6px]' : r === 33 || r === 34 ? 'h-[22px] leading-[20px]' : 'h-[28px] leading-[26px]';
        const sel = r === 32 ? 'bg-[#505050] -mr-[2px] border-r-4 border-r-[#3c7348]' : '';
        return <div key={r} className={`shrink-0 border-b-2 border-b-[#4f4f4f] pl-[3px] ${size} ${sel}`}>{r > 15 && r < 70 ? r : ''}</div>;
      })}
    </div>
  );
}

function Worksheet() {
  return (
    <div className="flex h-[1552px] w-[3554px] shrink-0 flex-col overflow-hidden bg-white font-['Lato','DejaVu_Sans',sans-serif] text-[17.200px]">
      <div className="flex h-[40px] shrink-0 border-b-2 border-[#bdbdbd] bg-[#171717] font-bold leading-[38px] text-white">
        <div className="flex w-[40px] shrink-0 items-end border-r-2 border-[#9b9b9b] pb-[4px] pl-[8px]">
          <div className="size-[26px] bg-[#5a5a5a] [clip-path:polygon(100%_0,100%_100%,0_100%)]" />
        </div>
        {COLS.map((c, i) => (
          <div key={c} className={`shrink-0 text-center ${colW(i)} ${c === 'G' ? 'relative z-10 -ml-[2px] h-[40px] w-[102px]! border-b-4 border-[#3c7348] bg-[#565656]' : 'border-r-2 border-[#4f4f4f]'}`}>{c}</div>
        ))}
      </div>
      <div className="flex h-[1512px] shrink-0 overflow-hidden">
        <RowNumbers />
        <div className="flex w-[3514px] shrink-0 flex-col overflow-hidden">
          <Notes />
          <HeadRow />
          <div className="flex flex-col text-[14px]">
            {DATA.slice(0, 38).map((r, i) => <DataRow key={i} row={r} idx={i} />)}
          </div>
        </div>
      </div>
    </div>
  );
}

function SheetArea() {
  return (
    <div className="flex h-[1582px] shrink-0 bg-[#2b2b2b]">
      <div className="flex w-[3554px] shrink-0 flex-col">
        <Worksheet />
        <div className="flex h-[30px] items-center">
          <div className="ml-[4px] h-[18px] w-[3435px] rounded-full bg-[#6b6b6b]" />
          <div className="ml-auto flex h-[30px] w-[8px] items-center justify-center border-l border-[#999] bg-white"><div className="h-[18px] w-[4px] bg-[#dedede]" /></div>
        </div>
      </div>
      <div className="flex w-[30px] shrink-0 flex-col items-center">
        <div className="flex h-[8px] w-full items-center justify-center bg-white"><div className="h-[4px] w-[18px] bg-[#dedede]" /></div>
        <div className="ml-[4px] mt-[236px] h-[850px] w-[18px] rounded-full bg-[#6b6b6b]" />
      </div>
    </div>
  );
}

function BottomBars() {
  return (
    <>
      <div className="h-[2px] shrink-0 bg-[#666]" />
      <div className="flex h-[50px] shrink-0 items-start bg-[#303030]">
        <Ico vb="0 0 61 20" className="ml-[29px] mt-[16px] h-[20px] w-[61px]">
          <path d="M15 0v20L0 10zM47 0v20l15-10z" fill="#6b6b6b" />
        </Ico>
        <div className="-mt-[2px] ml-[31px] h-[44px] w-[158px] rounded-b-[5px] bg-white text-center text-[24px] font-bold leading-[52px] tracking-[-0.500px] text-[#3c8050] shadow-[0_2px_0_#777]">Sheet1</div>
        <Ico vb="0 0 20 20" className="ml-[29px] mt-[14px] h-[20px] w-[20px]"><path d="M10 0v20M0 10h20" stroke="#b0b0b0" strokeWidth="4" /></Ico>
        <div className="ml-[26px] h-[40px] w-[2px] bg-[#5a5a5a]" />
      </div>
      <div className="h-[2px] shrink-0 bg-black" />
      <div className="flex h-[46px] shrink-0 items-center bg-gradient-to-b from-[#494949] to-[#363536] pb-[2px] text-[23.500px] text-[#ececec]">
        <Slot className="ml-[49px] w-[108px] tracking-[-0.100px]">Ready</Slot>
        <Ico vb="0 0 31 30" className="h-[30px] w-[31px]">
          <circle cx="14" cy="4.500" r="3.500" stroke="#f0f0f0" strokeWidth="2.200" />
          <path d="M16 29l-2-8-4 8c-1 1-4 0-3-2l2-8v-6l-6-2c-3-1-2-5 1-4l7 2h6l7-2c3-1 4 3 1 4l-6 2v5M18 18l11 11M29 18L18 29" stroke="#f0f0f0" strokeWidth="2.200" />
        </Ico>
        <Slot className="ml-[8px] w-[2760px] tracking-[0.080px]">Accessibility: Investigate</Slot>
        <div className="-mb-[2px] flex h-[46px] w-[74px] shrink-0 items-center justify-center bg-[#5c5c5c] pb-[2px]">
          <Ico vb="0 0 26 26" className="h-[26px] w-[26px]"><path d="M1.200 1.200h23.600v23.600H1.200zM9 1v24M17 1v24M1 9h24M1 17h24" stroke="#f0f0f0" strokeWidth="2.400" /></Ico>
        </div>
        <Ico vb="0 0 27 26" className="ml-[21px] h-[26px] w-[27px]">
          <path d="M1.200 1.200h24.600v23.600H1.200zM6 5h15v16H6zM9.500 9h8M9.500 13h8M9.500 17h8" stroke="#f0f0f0" strokeWidth="2.200" />
        </Ico>
        <Ico vb="0 0 28 26" className="ml-[44px] h-[26px] w-[28px]">
          <path d="M1.200 1.200h25.600v23.600H1.200zM1 16h16V1M9 1v15" stroke="#f0f0f0" strokeWidth="2.200" />
        </Ico>
        <div className="ml-[38px] h-[4px] w-[16px] bg-[#f2f2f2]" />
        <div className="ml-[14px] flex h-[8px] w-[200px] shrink-0 items-center rounded-full bg-[#757575] pl-[75px]">
          <div className="size-[32px] shrink-0 rounded-full bg-[#a3a3a3]" />
        </div>
        <Ico vb="0 0 16 16" className="ml-[14px] h-[16px] w-[16px]"><path d="M8 0v16M0 8h16" stroke="#f2f2f2" strokeWidth="3.600" /></Ico>
        <Slot className="ml-[35px]">90%</Slot>
      </div>
    </>
  );
}

/* ------------------------------------------------------------------ */
/* Dock                                                                */
/* ------------------------------------------------------------------ */

const Grad = ({ id, a, b }: { id: string; a: string; b: string }) => (
  <linearGradient id={id} x1="0" y1="0" x2="0" y2="1"><stop offset="0" stopColor={a} /><stop offset="1" stopColor={b} /></linearGradient>
);

const App0 = ({ a, b, id, dot, children }: P & { a: string; b: string; id: string; dot?: boolean }) => (
  <div className="flex w-[144px] shrink-0 flex-col">
    <svg viewBox="0 0 110 110" className="h-[110px] w-[110px] drop-shadow-[0_2px_3px_rgba(0,0,0,0.35)]" fill="none">
      <defs>
        <Grad id={id} a={a} b={b} />
        <clipPath id={`${id}-c`}><rect width="110" height="110" rx="25" /></clipPath>
      </defs>
      <g clipPath={`url(#${id}-c)`}>
        <rect width="110" height="110" fill={`url(#${id})`} />
        {children}
      </g>
    </svg>
    {dot && <div className="ml-[51px] mt-[21px] size-[8px] rounded-full bg-[#9adbd6]" />}
  </div>
);

const SublimeMark = () => (
  <>
    <path d="M84 17v18L60 45l24 9v21L25 93V74l24-11-24-8V34z" fill="#f29c38" />
    <path d="M49 63l6-3 29 15z" fill="#d98528" opacity=".6" />
  </>
);

const CodeMark = () => (
  <>
    <path d="M15 41c-1-2 0-3 1-4l4-3c1-1 3-1 4 0l46 40v19z" fill="#2463a3" />
    <path d="M15 69c-1 2 0 3 1 4l4 3c1 1 3 1 4 0l46-40V17z" fill="#2f7cc4" />
    <path d="M70 17l20 9c2 1 3 2 3 4v50c0 2-1 3-3 4l-20 9z" fill="#4a9fe8" />
  </>
);

const petals: [number, string][] = [[0, '#f2943a'], [45, '#f2d43a'], [90, '#b3cf46'], [135, '#6cbf7c'], [180, '#5e9fdb'], [225, '#8a7fc4'], [270, '#bb77ae'], [315, '#ef5a46']];
const tiles = ['#7be04f', '#f5b63c', '#ec8a33', '#d2362b', '#9aa5aa', '#ea5063', '#8a42c4', '#3e8cf0', '#62c79f'];

function Dock() {
  return (
    <div className="relative z-10 ml-[283px] flex h-[166px] w-[3019px] shrink-0 items-start rounded-[50px] border-2 border-[#4d7f7b] bg-gradient-to-b from-[#1e4744] to-[#215d59] pl-[21px] pt-[21px] shadow-[0_0_0_1px_rgba(0,0,0,0.5)]">
      <App0 id="fi" a="#5cc9f9" b="#2f6cea" dot>
        <path d="M59 0C50 22 46 44 46 64h16c0 16 1 30 6 46h42V0z" fill="#e4e8ef" />
        <path d="M28 32v10M80 32v10" stroke="#222" strokeWidth="4" strokeLinecap="round" />
        <path d="M21 73c16 18 50 18 66 0" stroke="#1a1a1a" strokeWidth="3.500" strokeLinecap="round" />
      </App0>
      <App0 id="lp" a="#b9c8c8" b="#b3c2c0">
        {tiles.map((f, i) => <rect key={i} x={18 + (i % 3) * 26.500} y={18 + Math.floor(i / 3) * 26.700} width="20" height="20.500" rx="5" fill={f} />)}
      </App0>
      <App0 id="ml" a="#2f6be8" b="#5ac8f8">
        <rect x="16" y="30" width="77" height="50" rx="6" fill="#f4f4f4" />
        <path d="M18 78l24-24M91 78L67 54" stroke="#b9b9b9" strokeWidth="2" />
        <path d="M17 32l32 32c3 3 8 3 11 0l32-32" stroke="#b5b5b5" strokeWidth="2.500" fill="#f1f1f1" />
      </App0>
      <App0 id="ph" a="#ffffff" b="#fafafa">
        <g className="mix-blend-multiply">
          {petals.map(([r, f]) => <rect key={r} x="41" y="7" width="28" height="47" rx="14" fill={f} opacity=".88" className="mix-blend-multiply" transform={`rotate(${r} 55 55)`} />)}
        </g>
      </App0>
      <App0 id="ft" a="#83ee7e" b="#4fbb46">
        <rect x="16" y="31" width="54" height="48" rx="13" fill="#f3f8f2" />
        <path d="M73 49l15-12c3-2 5-1 5 2v32c0 3-2 4-5 2L73 61z" fill="#e9f3e7" />
      </App0>
      <App0 id="ca" a="#ffffff" b="#f1f0ee">
        <rect width="110" height="34" fill="#e25d52" />
        <text x="55" y="27" textAnchor="middle" fontFamily="Inter" fontWeight="600" fontSize="23" fill="#fff">JUN</text>
        <text x="54" y="92" textAnchor="middle" fontFamily="Inter" fontWeight="300" fontSize="67" fill="#222">9</text>
      </App0>
      <div className="relative">
        <div className="absolute left-[96px] top-[14px] flex h-[84px] w-[19px] flex-col overflow-hidden rounded-r-[6px]">
          <div className="h-[25px] bg-[#c4c4c4]" /><div className="h-[20px] bg-[#5fb8f2]" /><div className="h-[20px] bg-[#f08f2c]" /><div className="h-[19px] bg-[#64cf68]" />
        </div>
        <App0 id="co" a="#b18f57" b="#9d7446">
          <path d="M0 0h8v110H0z" fill="#8a6535" opacity=".6" />
          <circle cx="57" cy="55" r="34" stroke="#876233" strokeWidth="2.500" />
          <ellipse cx="57" cy="47" rx="12" ry="13" fill="#876233" />
          <path d="M33 79c4-17 44-17 48 0-13 13-35 13-48 0z" fill="#876233" />
        </App0>
      </div>
      <App0 id="re" a="#ffffff" b="#f3f2f0">
        {['#2f7bf5', '#e84a3c', '#f0992e'].map((f, i) => (
          <g key={f}>
            <circle cx="21.500" cy={27.500 + i * 27.300} r="8.500" stroke={f} strokeWidth="2.200" />
            <circle cx="21.500" cy={27.500 + i * 27.300} r="5.500" fill={f} />
            <path d={`M41 ${27.500 + i * 27.300}h57`} stroke="#b3b3b3" strokeWidth="2" />
          </g>
        ))}
      </App0>
      <App0 id="no" a="#fbfaf8" b="#e8e5df">
        <rect width="110" height="28" fill="#f8cd4b" />
        <path d="M0 28.500h110" stroke="#b98f2d" strokeWidth="1" />
        <path d="M0 33h110" stroke="#b0b0b0" strokeWidth="2" strokeDasharray="1.500 2.500" />
        <path d="M0 55h110M0 82h110" stroke="#cfcdc9" strokeWidth="2" />
      </App0>
      <App0 id="mu" a="#ea6679" b="#e43a41">
        <path d="M39 28c0-3 1-4 4-5l33-7c3-.6 4 .6 4 3v54c0 6-4 9-10 10-7 1-11-3-11-8s4-8 9-9c5-.8 6-1.600 6-5V35l-29 6.500V80c0 7-4 10-10 11-7 1-12-3-12-8.500s4-8 9-9c6-1 7-2 7-5z" fill="#fff" />
      </App0>
      <App0 id="as" a="#53b4ee" b="#2559d6">
        <g stroke="#fff" strokeWidth="9" strokeLinecap="round">
          <path d="M60 24L37 64M49 24l33 59M21 67.500h40M77 67.500h12M31 79l-3 5" />
        </g>
      </App0>
      <App0 id="se" a="#dbe6ec" b="#8b8b89">
        <circle cx="55" cy="55" r="47" fill="#2c2c2c" />
        <circle cx="55" cy="55" r="43.500" stroke="#a5a8aa" strokeWidth="5" strokeDasharray="2 1.800" />
        <circle cx="55" cy="55" r="36.500" stroke="#b9bdc0" strokeWidth="6" />
        <circle cx="55" cy="55" r="33" fill="#3c3b39" />
        <circle cx="55" cy="55" r="24" stroke="#7b7a77" strokeWidth="8" strokeDasharray="1.800 1.500" />
        <circle cx="55" cy="55" r="19" stroke="#8d8c88" strokeWidth="4" />
        <path d="M55 55h36M55 55L37 24M55 55L37 86" stroke="#b9bdc0" strokeWidth="4.500" />
        <circle cx="55" cy="55" r="4" fill="#3c3b39" stroke="#b9bdc0" strokeWidth="2.500" />
      </App0>
      <div className="ml-[14px] mr-[47px] h-[122px] w-[2px] shrink-0 bg-[#4f8985]" />
      <App0 id="su" a="#505050" b="#3f3f3f" dot><SublimeMark /></App0>
      <App0 id="sa" a="#fdfdfd" b="#d6d6d8" dot>
        <defs><Grad id="sky" a="#4fa5ee" b="#2f6be0" /></defs>
        <circle cx="55" cy="55" r="47.500" fill="url(#sky)" />
        <circle cx="55" cy="55" r="42.500" stroke="#d5e6fa" strokeWidth="5" strokeDasharray="1.200 2.510" />
        <path d="M89 27L60 60 49 50z" fill="#e2453a" />
        <path d="M21 84l28-34 11 10z" fill="#f0f0f0" />
      </App0>
      <App0 id="vs" a="#ffffff" b="#ffffff" dot><CodeMark /></App0>
      <App0 id="xl" a="#ffffff" b="#ffffff" dot>
        <rect x="28" y="18" width="32" height="18" fill="#4a9f6a" /><rect x="59" y="18" width="32" height="18" fill="#62c28a" />
        <rect x="28" y="36" width="32" height="18" fill="#3b8556" /><rect x="59" y="36" width="32" height="18" fill="#4a9f6a" />
        <rect x="28" y="54" width="32" height="18" fill="#2d5e38" /><rect x="59" y="54" width="32" height="18" fill="#3b7f46" />
        <rect x="28" y="72" width="63" height="18" rx="2" fill="#2d5c36" />
        <rect x="9.500" y="34" width="41" height="41" rx="3" fill="#317a40" />
        <path d="M22 43l16 23M38 43L22 66" stroke="#fff" strokeWidth="4.500" />
      </App0>
      <App0 id="te" a="#dde8ee" b="#8a8a88" dot>
        <rect x="3.500" y="3.500" width="103" height="103" rx="22" fill="#000" />
        <rect x="10" y="12" width="90" height="86" rx="14" fill="#242424" />
        <path d="M20 22l11 6-11 6" stroke="#fff" strokeWidth="3.200" /><path d="M37 40.500h15" stroke="#fff" strokeWidth="3.200" />
      </App0>
      <div className="ml-[14px] mr-[38px] h-[122px] w-[2px] shrink-0 bg-[#4f8985]" />
      <div className="relative mt-[5px] h-[100px] w-[128px] shrink-0 bg-[#303843]">
        <div className="h-[3px] bg-[#54504f]" />
        <div className="h-[4px] w-full bg-[#3e4752]" />
        <div className="mt-[3px] h-[3px] w-[9px] bg-[#5a6470]" />
        <svg viewBox="0 0 110 110" className="absolute left-[84px] top-[69px] h-[42px] w-[42px]"><rect width="110" height="110" rx="25" fill="#484848" /><SublimeMark /></svg>
      </div>
      <div className="relative ml-[16px] mt-[8px] h-[94px] w-[128px] shrink-0 bg-white">
        <svg viewBox="0 0 128 94" className="h-[94px] w-[128px]">
          <rect width="128" height="5" fill="#e4e4e4" />
          <rect width="4" height="94" fill="#3a3f4a" />
          <rect x="4" y="5" width="24" height="87" fill="#eeeeee" />
          {Array.from({ length: 24 }, (_, i) => <rect key={i} x={7 + (i % 3)} y={8 + i * 3.400} width={10 + ((i * 7) % 10)} height="1.500" fill={i % 5 === 0 ? '#d9c37a' : '#c2c2c2'} />)}
          {Array.from({ length: 6 }, (_, i) => <rect key={i} x="36" y={i * 1.800 + 4} width={60 + ((i * 17) % 28)} height="1" fill="#c9c9c9" />)}
          <rect x="34" y="19" width="90" height="5" fill="#f0f0f0" /><rect x="38" y="11" width="34" height="1.500" fill="#8fa5d8" /><rect x="38" y="20.500" width="28" height="1.500" fill="#9b8fd8" />
          {Array.from({ length: 5 }, (_, r) => Array.from({ length: 5 }, (_, c) => (
            <rect key={`${r}-${c}`} x={36 + c * 18 + ((r * c) % 3)} y={28 + r * 9} width={c === 0 ? 6 : 10} height="5" fill="#c4c4c4" />
          )))}
          <rect x="32" y="71" width="94" height="3" fill="#dcdcdc" />
          {Array.from({ length: 4 }, (_, i) => <rect key={i} x="37" y={77 + i * 3} width={20 + ((i * 5) % 9)} height="1.300" fill="#b8a9cf" />)}
          <rect y="91.500" width="128" height="2.500" fill="#3f83c8" />
        </svg>
        <svg viewBox="0 0 110 110" className="absolute left-[84px] top-[68px] h-[41px] w-[41px]"><rect width="110" height="110" rx="25" fill="#fff" /><CodeMark /></svg>
      </div>
      <svg viewBox="0 0 98 126" className="-mt-[10px] ml-[31px] h-[126px] w-[98px] shrink-0" fill="none">
        <defs>
          <linearGradient id="bin" x1="0" y1="0" x2="1" y2="0">
            <stop offset="0" stopColor="#6d7172" /><stop offset=".25" stopColor="#8d9091" /><stop offset=".5" stopColor="#a2a5a5" /><stop offset=".75" stopColor="#6f7273" /><stop offset="1" stopColor="#8c8f8f" />
          </linearGradient>
        </defs>
        <ellipse cx="49" cy="17" rx="48.500" ry="12" fill="#8b8f8f" />
        <path d="M8 14l12-9 8 4 6-8 10 7 6-2 8-5 8 8 10-3 8 10 6 4-8 8-16 3-30-1-20-5z" fill="#e9e9e7" />
        <path d="M20 8l8 14 8-14M44 4l-4 20M60 4l8 20 6-14M52 10l16 16M14 12l10 14M80 10l-8 16" stroke="#8b8b88" strokeWidth="2" />
        <path d="M34 12l8 3-4 4z" fill="#3fc48f" /><path d="M60 16l8 6-9 3z" fill="#7b3f2f" /><path d="M74 14l6 7-9 1z" fill="#39588f" />
        <path d="M.5 17c4 15 93 15 97 0L86 112c-2 17-72 17-74 0z" fill="url(#bin)" />
        <path d="M.5 17c4 15 93 15 97 0" stroke="#b9bcbc" strokeWidth="1.500" />
        <path d="M14 108c8 10 62 10 70 0" stroke="#b2b5b5" strokeWidth="2" opacity=".6" />
        <path d="M49 30c10-2 22 0 16 12s-20 10-24 2" fill="#c4c6c6" opacity=".35" />
      </svg>
    </div>
  );
}

/* ------------------------------------------------------------------ */

export default function App() {
  return (
    <div className="flex h-[2240px] w-[3584px] flex-col overflow-hidden bg-gradient-to-b from-[#2d736e] to-[#317a73] font-['Inter','Liberation_Sans',sans-serif]">
      <MenuBar />
      <div className="relative mt-[2px] flex h-[2012px] w-full shrink-0 flex-col overflow-hidden rounded-[20px] bg-[#2e2e2e] shadow-[0_0_0_1px_#000,0_16px_50px_14px_rgba(0,0,0,0.65)]">
        <TitleBar />
        <TabRow />
        <Ribbon />
        <div className="h-[2px] shrink-0 bg-black" />
        <FormulaBar />
        <div className="h-[6px] shrink-0 bg-gradient-to-b from-[#8c8c8c] via-white to-[#8c8c8c]" />
        <SheetArea />
        <BottomBars />
        <div className="pointer-events-none absolute inset-0 rounded-[20px] border-2 border-white/25" />
      </div>
      <div className="h-[2px] shrink-0" />
      <Dock />
    </div>
  );
}
